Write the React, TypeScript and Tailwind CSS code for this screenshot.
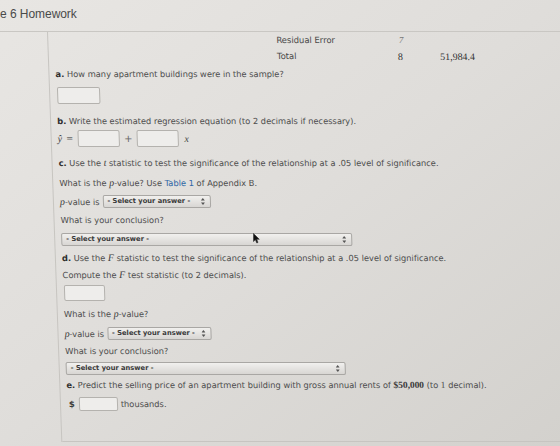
import type { ReactNode } from 'react';

// Small up/down arrows used at the right of every dropdown
function Arrows() {
  return (
    <svg width="4" height="7" viewBox="0 0 4 7" className="shrink-0">
      <path d="M2 0 L4 2.6 L0 2.6 Z" fill="#555" />
      <path d="M2 7 L4 4.4 L0 4.4 Z" fill="#555" />
    </svg>
  );
}

function Select({ width }: { width: string }) {
  return (
    <div
      className={`${width} flex h-[13px] items-center justify-between rounded-[2px] border border-[#a9a7a4] bg-gradient-to-b from-[#f1f0ee] to-[#d8d6d3] pl-[4px] pr-[5px]`}
    >
      <span className="font-['DejaVu_Sans'] text-[6.8px] font-bold leading-none text-[#3b3b3b]">
        - Select your answer -
      </span>
      <Arrows />
    </div>
  );
}

function Box({ className = '' }: { className?: string }) {
  return (
    <div className={`rounded-[2px] border border-[#b4b2ae] bg-[#eeedeb] ${className}`} />
  );
}

function M({ children }: { children: ReactNode }) {
  return <i className="font-['Liberation_Serif'] text-[10px] text-[#3c3c3c]">{children}</i>;
}

function Label({ l, children }: { l: string; children: ReactNode }) {
  return (
    <p className="leading-[14px]">
      <b className="text-[#2f2f2f]">{l}.</b> {children}
    </p>
  );
}

export default function App() {
  return (
    <div className="relative h-[446px] w-[560px] overflow-hidden bg-gradient-to-br from-[#e8e6e3] via-[#dfddda] to-[#d3d1cd] font-['DejaVu_Sans',sans-serif] text-[8.4px] tracking-[-0.05px] text-[#4d4d4d]">
      {/* Top bar */}
      <header className="flex h-[32px] items-start border-b border-[#c9c7c3] pt-[6px]">
        <span className="font-['Liberation_Sans'] text-[12px] leading-[16px] text-[#4a4a4a]">e 6 Homework</span>
      </header>

      <div className="flex h-[410px] origin-top-left skew-x-2">
        <aside className="w-[48px] shrink-0 border-r border-[#c7c5c1]" />

        <main className="flex-1 border-b border-[#c7c5c1] pl-[6px]">
          {/* ANOVA rows */}
          <div className="w-[428px] pl-[222px] font-['DejaVu_Sans'] text-[8.5px] text-[#4a4a4a]">
            <div className="flex h-[16px] items-center pt-[1px]">
              <span className="w-[118px]">Residual Error</span>
              <span className="w-[9px] text-right font-['Liberation_Serif'] text-[9px] italic text-[#777]">7</span>
            </div>
            <div className="flex h-[16px] items-center">
              <span className="w-[118px]">Total</span>
              <span className="w-[8px] text-right font-['Liberation_Serif'] text-[10px] text-[#333]">8</span>
              <span className="w-[72px] text-right font-['Liberation_Serif'] text-[10px] text-[#333]">51,984.4</span>
            </div>
          </div>

          {/* a */}
          <div className="mt-[3px]">
            <Label l="a">How many apartment buildings were in the sample?</Label>
            <Box className="ml-[1px] mt-[6px] h-[17px] w-[43px]" />
          </div>

          {/* b */}
          <div className="mt-[10px]">
            <Label l="b">Write the estimated regression equation (to 2 decimals if necessary).</Label>
            <div className="mt-[2px] flex h-[17px] items-center">
              <M>ŷ</M>
              <span className="ml-[4px] mr-[5px] text-[#666]">=</span>
              <Box className="h-[17px] w-[42px]" />
              <span className="mx-[4px] text-[10px] text-[#666]">+</span>
              <Box className="h-[17px] w-[42px]" />
              <span className="ml-[6px]">
                <M>x</M>
              </span>
            </div>
          </div>

          {/* c */}
          <div className="mt-[9px]">
            <Label l="c">
              Use the <M>t</M> statistic to test the significance of the relationship at a .05 level of significance.
            </Label>
            <p className="mt-[6px] leading-[14px]">
              What is the <M>p</M>-value? Use <span className="text-[#2f66a5]">Table 1</span> of Appendix B.
            </p>
            <div className="mt-[4px] flex h-[14px] items-center gap-[3px]">
              <span>
                <M>p</M>-value is
              </span>
              <Select width="w-[108px]" />
            </div>
            <p className="mt-[5px] leading-[14px]">What is your conclusion?</p>
            <div className="mt-[6px]">
              <Select width="w-[291px]" />
            </div>
          </div>

          {/* d */}
          <div className="mt-[5px]">
            <Label l="d">
              Use the <M>F</M> statistic to test the significance of the relationship at a .05 level of significance.
            </Label>
            <p className="mt-[3px] leading-[14px]">
              Compute the <M>F</M> test statistic (to 2 decimals).
            </p>
            <Box className="ml-[1px] mt-[3px] h-[16px] w-[41px]" />
            <p className="mt-[6px] leading-[14px]">
              What is the <M>p</M>-value?
            </p>
            <div className="mt-[5px] flex h-[14px] items-center gap-[3px]">
              <span>
                <M>p</M>-value is
              </span>
              <Select width="w-[104px]" />
            </div>
            <p className="mt-[4px] leading-[14px]">What is your conclusion?</p>
            <div className="mt-[4px]">
              <Select width="w-[280px]" />
            </div>
          </div>

          {/* e */}
          <div className="mt-[3px]">
            <Label l="e">
              Predict the selling price of an apartment building with gross annual rents of{' '}
              <span className="font-['Liberation_Serif'] text-[9.5px] font-bold text-[#3a3a3a]">$50,000</span> (to{' '}
              <span className="font-['Liberation_Serif'] text-[9.5px]">1</span> decimal).
            </Label>
            <div className="mt-[5px] flex h-[14px] items-center">
              <span className="ml-[2px] mr-[4px] font-bold text-[#3a3a3a]">$</span>
              <Box className="h-[14px] w-[39px]" />
              <span className="ml-[3px]">thousands.</span>
            </div>
          </div>
        </main>
      </div>

      {/* Mouse pointer resting over the conclusion dropdown */}
      <svg className="absolute left-[253px] top-[233px]" width="7" height="11" viewBox="0 0 7 11">
        <path d="M0.5 0.5 L0.5 8.5 L2.4 6.8 L3.8 10 L5 9.4 L3.7 6.3 L6.3 6.3 Z" fill="#111" stroke="#333" strokeWidth="0.6" />
      </svg>
    </div>
  );
}
